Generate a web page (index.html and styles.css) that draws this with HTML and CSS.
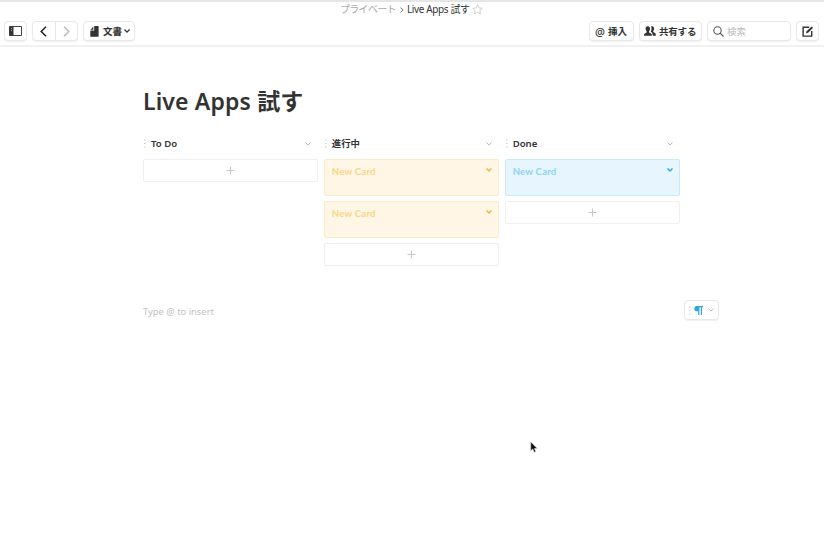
FILE: index.html
```html
<!DOCTYPE html>
<html lang="ja">
<head>
<meta charset="utf-8">
<title>Live Apps 試す</title>
<link rel="stylesheet" href="styles.css">
</head>
<body>
<svg class="defs" aria-hidden="true">
  <symbol id="chevron" viewBox="0 0 8 6"><path d="M1.5 1.5 4 4.1 6.5 1.5" fill="none" stroke="currentColor"/></symbol>
  <symbol id="plus" viewBox="0 0 9 9"><path d="M4.5 0.5v8M0.5 4.5h8" fill="none" stroke="currentColor" stroke-width="1.1"/></symbol>
  <symbol id="grip" viewBox="0 0 3 9"><path d="M1 1h1.5M1 4.5h1.5M1 8h1.5" stroke="currentColor" stroke-width="1"/></symbol>
</svg>
<header class="topbar">
  <nav class="crumbs">
    <span class="folder">プライベート</span>
    <svg class="sep" viewBox="0 0 4 8"><path d="M.5 1.6 3.2 4 .5 6.4" fill="none" stroke="#777"/></svg>
    <span class="current">Live Apps 試す</span>
    <svg class="star" viewBox="0 0 11 11"><path d="m5.5.8 1.4 3.1 3.4.4-2.5 2.3.7 3.4-3-1.7-3 1.7.7-3.4L.7 4.3l3.4-.4z" fill="none" stroke="#c4c4c4" stroke-width=".8"/></svg>
  </nav>
  <div class="toolbar">
    <button class="btn side"><svg width="13" height="10" viewBox="0 0 13 10"><path d="M.5.5h12v9H.5z" fill="#fff" stroke="#444"/><path d="M.5.5h4v9h-4z" fill="#333"/><path d="M2 2.5h1M2 4.5h1" stroke="#aaa"/></svg></button>
    <div class="btn history">
      <button><svg width="7" height="11" viewBox="0 0 7 11"><path d="M6 .8 1.2 5.5 6 10.2" fill="none" stroke="#222" stroke-width="1.5"/></svg></button>
      <button><svg width="7" height="11" viewBox="0 0 7 11"><path d="m1 .8 4.8 4.7L1 10.2" fill="none" stroke="#b5b5b5" stroke-width="1.3"/></svg></button>
    </div>
    <button class="btn doc"><svg width="9" height="11" viewBox="0 0 9 11"><path d="M4.2 0H8.6v10.7H.3V4.6h3.9z" fill="#333"/><path d="M3.3.5v3.2H.5z" fill="#333"/></svg><span>文書</span><svg class="caret" width="8" height="6"><use href="#chevron"/></svg></button>
    <span class="spacer"></span>
    <button class="btn insert"><span class="at">@</span><span>挿入</span></button>
    <button class="btn share"><svg width="12" height="10" viewBox="0 0 12 10"><path d="M7 .6c1-.8 3.1-.2 3.1 1.8 0 1.4-.4 2-.9 2.6v.8c.3.7 2.6.8 2.6 2.6v1.3H8.7c0-2.2-.8-3.3-2-3.9.8-1.4 1.2-3.8.3-5.2z" fill="#333"/><path d="M3.8.3c1.7 0 2.3 1.1 2.2 2.5C6 4 5.6 4.8 5 5.4v.8c.3.8 2.9.8 2.9 2.8v.7H0V9c0-2 2.4-2 2.7-2.8v-.8C2.1 4.8 1.7 4 1.6 2.8 1.5 1.4 2.2.3 3.8.3z" fill="#333"/></svg><span>共有する</span></button>
    <label class="btn search"><svg width="11" height="11" viewBox="0 0 11 11"><circle cx="4.5" cy="4.5" r="3.7" fill="none" stroke="#555" stroke-width="1.1"/><path d="m7.2 7.2 3.3 3.3" stroke="#555" stroke-width="1.2"/></svg><span>検索</span></label>
    <button class="btn compose"><svg width="12" height="11" viewBox="0 0 12 11"><path d="M7.2 1.3H1.1v8.8h8.6V5" fill="none" stroke="#333" stroke-width="1.4"/><path d="m4 7.4.6-2.1L9.7.4l1.4 1.4-5 5z" fill="#333"/></svg></button>
  </div>
</header>
<main class="page">
  <h1>Live Apps 試す</h1>
  <div class="board">
    <section>
      <h2><svg class="grip"><use href="#grip"/></svg><span>To Do</span><svg class="caret"><use href="#chevron"/></svg></h2>
      <button class="add"><svg><use href="#plus"/></svg></button>
    </section>
    <section>
      <h2><svg class="grip"><use href="#grip"/></svg><span class="kanji">進行中</span><svg class="caret"><use href="#chevron"/></svg></h2>
      <article class="card yellow"><span>New Card</span><svg class="caret"><use href="#chevron"/></svg></article>
      <article class="card yellow"><span>New Card</span><svg class="caret"><use href="#chevron"/></svg></article>
      <button class="add"><svg><use href="#plus"/></svg></button>
    </section>
    <section>
      <h2><svg class="grip"><use href="#grip"/></svg><span>Done</span><svg class="caret"><use href="#chevron"/></svg></h2>
      <article class="card blue"><span>New Card</span><svg class="caret"><use href="#chevron"/></svg></article>
      <button class="add"><svg><use href="#plus"/></svg></button>
    </section>
  </div>
  <div class="line">
    <p>Type @ to insert</p>
    <button class="btn format"><svg class="grip"><use href="#grip"/></svg><svg width="9" height="9" viewBox="0 0 9 9"><path d="M3 0h6v1.3H8V9H6.8V1.3H5.4V9H4.2V5.3H3A2.6 2.6 0 0 1 3 0z" fill="#2ea5dc"/></svg><svg class="caret"><use href="#chevron"/></svg></button>
  </div>
</main>
<svg class="cursor" viewBox="0 0 8 12"><path d="M.7.7v9L2.8 8l1.4 3.3 1.6-.7-1.4-3.1h2.8z" fill="#111" stroke="#ddd" stroke-width=".6"/></svg>
</body>
</html>
```

FILE: styles.css
```css
* { box-sizing: border-box; }
body {
  margin: 0;
  height: 540px;
  overflow: hidden;
  background: #fff;
  color: #333;
  font-family: "Noto Sans", "Noto Sans CJK JP", sans-serif;
}
svg { display: block; flex: none; }
.defs { position: absolute; width: 0; height: 0; }
button { padding: 0; border: 0; background: none; color: inherit; font: inherit; }

.topbar {
  height: 47px;
  border-top: 2px solid #e6e6e6;
  border-bottom: 2px solid #f1f1f1;
}
.crumbs {
  display: flex;
  align-items: center;
  height: 15px;
  padding-left: 340px;
  font-size: 10px;
  line-height: 15px;
  white-space: nowrap;
}
.folder { width: 56px; color: #aaa; letter-spacing: -.7px; }
.sep { width: 4px; height: 8px; margin: 0 3px 0 4px; }
.current { width: 63px; letter-spacing: -.38px; }
.star { width: 11px; height: 11px; margin-left: 2px; }

.toolbar {
  display: flex;
  align-items: center;
  padding: 4px 5px 0 4px;
  font-size: 11px;
  font-weight: 600;
}
.btn {
  display: flex;
  align-items: center;
  height: 20px;
  border: 1px solid #e8e8e8;
  border-radius: 4px;
  background: #fff;
  box-shadow: 0 1px 1px #f0f0f0;
  white-space: nowrap;
}
.side { width: 23px; justify-content: center; }
.history { width: 46px; margin-left: 5px; }
.history button { display: flex; flex: 1; align-items: center; justify-content: center; height: 18px; }
.history button + button { border-left: 1px solid #e8e8e8; }
.doc { width: 52px; margin-left: 5px; padding-left: 6px; }
.doc span { width: 19px; margin-left: 4px; font-size: 9.5px; }
.doc .caret { margin-left: 1px; stroke-width: 1.3px; }
.spacer { flex: 1; }
.insert { width: 45px; padding-left: 5px; }
.at { margin-right: 3px; font-weight: 500; }
.insert span + span { font-size: 9.5px; }
.share { width: 63px; margin-left: 5px; padding-left: 4px; }
.share span { margin-left: 3px; font-size: 9.5px; letter-spacing: -.2px; }
.search { width: 84px; margin-left: 5px; padding-left: 5px; color: #bbb; font-size: 9.5px; font-weight: 400; }
.search span { margin-left: 3px; }
.compose { width: 23px; margin-left: 5px; justify-content: center; }

.page { width: 576px; margin-left: 143px; }
h1 {
  height: 34px;
  margin: 37px 0 0;
  font-size: 23px;
  line-height: 34px;
  font-weight: 600;
  letter-spacing: .15px;
  white-space: nowrap;
}
.board {
  display: grid;
  grid-template-columns: repeat(3, 1fr);
  gap: 5.5px;
  width: 537px;
  height: 148px;
  margin-top: 18px;
}
h2 {
  display: flex;
  align-items: center;
  height: 15px;
  margin: 0 0 8px;
  font-size: 9.6px;
  line-height: 15px;
  font-weight: 600;
}
.grip { width: 3px; height: 9px; color: #ccc; }
h2 span { flex: 1; height: 15px; margin-left: 5px; padding-top: 1px; line-height: 14px; }
h2 .kanji { font-size: 9.4px; }
.caret { width: 8px; height: 6px; }
h2 .caret { margin-right: 6px; color: #bbb; }
.card {
  display: flex;
  justify-content: space-between;
  height: 37px;
  margin-bottom: 5px;
  padding: 4px 5px 0 7px;
  border: 1px solid;
  border-radius: 2px;
  font: 700 9.6px/14px Lato, sans-serif;
  letter-spacing: .2px;
}
.card span { margin-top: 1px; }
.card .caret { margin-top: 3px; stroke-width: 1.4px; }
.yellow { border-color: #fbebcb; background: #fff6e5; color: #f9d589; }
.yellow .caret { color: #efb642; }
.blue { border-color: #c8e9f8; background: #e7f6fe; color: #8fd2f2; }
.blue .caret { color: #36a5d8; }
.add {
  display: flex;
  align-items: center;
  justify-content: center;
  width: 100%;
  height: 23px;
  border: 1px solid #efefef;
  border-radius: 2px;
  color: #c8c8c8;
}
.add svg { width: 9px; height: 9px; }
.line { display: flex; justify-content: space-between; margin-top: 16px; }
.line p { margin: 5px 0 0; color: #c2c2c2; font-size: 9.4px; line-height: 14px; }
.format { width: 35px; height: 20px; padding-left: 3px; }
.format .grip + svg { margin: 0 4px 0 3px; }
.format .caret { color: #bbb; }
.cursor { position: absolute; left: 530px; top: 441px; width: 8px; height: 12px; }
```
